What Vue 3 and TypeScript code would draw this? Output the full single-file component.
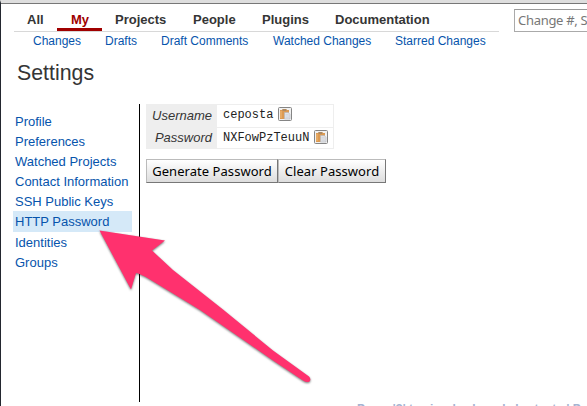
<script setup lang="ts">
interface Tab { label: string; start: number }

const tabs: Tab[] = [
  { label: 'All', start: 27 },
  { label: 'My', start: 71 },
  { label: 'Projects', start: 115 },
  { label: 'People', start: 193 },
  { label: 'Plugins', start: 262 },
  { label: 'Documentation', start: 335 },
]
const links: Tab[] = [
  { label: 'Changes', start: 33 },
  { label: 'Drafts', start: 105 },
  { label: 'Draft Comments', start: 161 },
  { label: 'Watched Changes', start: 273 },
  { label: 'Starred Changes', start: 395 },
]
const columns = (items: Tab[], end: number): string =>
  items.map((t, i) => `${(items[i + 1]?.start ?? end) - t.start}px`).join(' ')

const sections: string[] = ['Profile', 'Preferences', 'Watched Projects', 'Contact Information', 'SSH Public Keys', 'HTTP Password', 'Identities', 'Groups']
const credentials = [
  { label: 'Username', value: 'ceposta' },
  { label: 'Password', value: 'NXFowPzTeuuN' },
]
</script>

<template>
  <div class="window">
    <header class="top">
      <div class="menus">
        <nav class="tabs" :style="{ gridTemplateColumns: columns(tabs, 499) }">
          <a v-for="t in tabs" :key="t.label" :class="{ current: t.label === 'My' }">{{ t.label }}</a>
        </nav>
        <nav class="links" :style="{ gridTemplateColumns: columns(links, 499) }">
          <a v-for="l in links" :key="l.label">{{ l.label }}</a>
        </nav>
      </div>
      <div class="search">Change #, S</div>
    </header>
    <h1>Settings</h1>
    <main>
      <aside>
        <a v-for="s in sections" :key="s" :class="{ selected: s === 'HTTP Password' }">{{ s }}</a>
      </aside>
      <section>
        <div class="credentials">
          <div v-for="c in credentials" :key="c.label" class="row">
            <div class="label">{{ c.label }}</div>
            <div class="value">
              <code>{{ c.value }}</code>
              <svg class="copy" width="14" height="14" viewBox="0 0 14 14">
                <rect x=".5" y=".5" width="13" height="13" rx="1" fill="#f1f1f1" stroke="#858585" />
                <path d="M2 3h2l1-1h3l1 1h2v9H2z" fill="#dc9a52" />
                <path d="M4.5 2h3.8v2H4.5z" fill="#ad8961" />
                <path d="M3 4v7" stroke="#f0ba76" />
                <path d="M6.500 5.500h4l1.500 2V12H6.500z" fill="#e1e3e7" stroke="#b4b7bd" stroke-width=".6" />
                <path d="M7.500 7.500h3M7.500 9h3.500M7.500 10.500h3.500" stroke="#ccd0d6" stroke-width=".6" />
              </svg>
            </div>
          </div>
        </div>
        <div class="buttons">
          <button class="generate">Generate Password</button>
          <button class="clear">Clear Password</button>
        </div>
      </section>
    </main>
    <footer>Press '?' to view keyboard shortcuts | P</footer>
    <svg class="arrow" width="240" height="170" viewBox="0 0 240 170">
      <path class="pointer" d="M9.500 10.500L75 20.500L62 30.500L83 50L133 89.500L183 130.500L219 156.500Q221.500 159.500 219.500 161.500Q217 163 213 160.500L183 140.500L110 90L60 59.500Q50 53.500 46 53L41 69.500Z" />
    </svg>
  </div>
</template>

<style>
body { margin: 0; overflow: hidden; background: #fff; }
</style>

<style scoped>
* { box-sizing: border-box; }
.window {
  position: relative; display: flex; flex-direction: column; width: 587px; height: 406px;
  overflow: hidden; border-left: 1px solid #23272f; border-top: 3px solid #dedede;
  font-family: "Liberation Sans", Arial, sans-serif; color: #353535; background: #fff;
}
.top { display: flex; flex: none; height: 53px; border-top: 1px solid #777; }
.menus { width: 513px; flex: none; padding-left: 13px; }
.tabs { display: grid; height: 28px; margin-right: 15px; padding-left: 13px; border-bottom: 1px solid #d8d8d8; font-weight: bold; font-size: 13px; line-height: 32px; }
.current { position: relative; color: #a00000; }
.current::after { content: ""; position: absolute; left: -14px; top: 24px; width: 45px; height: 3px; background: #a00000; }
.links { display: grid; padding-left: 19px; font-size: 12px; line-height: 18px; color: #0654ac; white-space: nowrap; }
.search { flex: none; width: 100px; height: 23px; margin-top: 5px; padding-left: 3px; border: 1px solid #aaa; border-top-color: #999; font: 13px/21px "Noto Sans", sans-serif; color: #777; white-space: nowrap; letter-spacing: -.3px; }
h1 { flex: none; margin: 0; height: 48px; padding: 5px 0 0 16px; font-size: 21.33px; line-height: 25px; font-weight: normal; }
main { display: flex; flex: none; height: 298px; }
aside { display: flex; flex-direction: column; width: 139px; height: 298px; padding: 8px 7px 0 12px; border-right: 1px solid #000; }
aside a { flex: none; height: 20px; padding-left: 2px; font-size: 13px; line-height: 20px; color: #0654ac; white-space: nowrap; }
aside .selected { height: 21px; margin-top: -1px; margin-bottom: 1px; line-height: 22px; background: #d5e9f8; }
section { padding-left: 6px; }
.credentials { width: 188px; height: 45px; border: 1px solid #eee; }
.row { display: flex; height: 22px; }
.row + .row .value { border-top: 1px solid #eee; }
.label { width: 70px; padding-right: 5px; text-align: right; font-size: 13px; font-style: italic; line-height: 22px; background: #eee; }
.value { display: flex; flex: 1; align-items: flex-start; padding-left: 6px; }
code { font: 12px/20px "Liberation Mono", monospace; color: #222; }
.copy { flex: none; margin: 2px 0 0 5px; }
.buttons { display: flex; margin-top: 10px; }
button { height: 24px; padding: 0; border: 1px solid; border-color: #bbb #777 #777 #bbb; border-radius: 0; background: linear-gradient(#fff, #ddd); color: #000; font: 13px/20px "Noto Sans", sans-serif; letter-spacing: .05px; white-space: nowrap; }
.generate { width: 132px; }
.clear { width: 108px; }
footer { padding-left: 356px; font-size: 11.9px; line-height: 15px; font-weight: bold; color: #a5b3d1; white-space: nowrap; }
.arrow { position: absolute; left: 89px; top: 217px; filter: drop-shadow(0 1px 1px rgb(0 0 0 / 55%)); }
.pointer { fill: #ff316e; }
</style>
